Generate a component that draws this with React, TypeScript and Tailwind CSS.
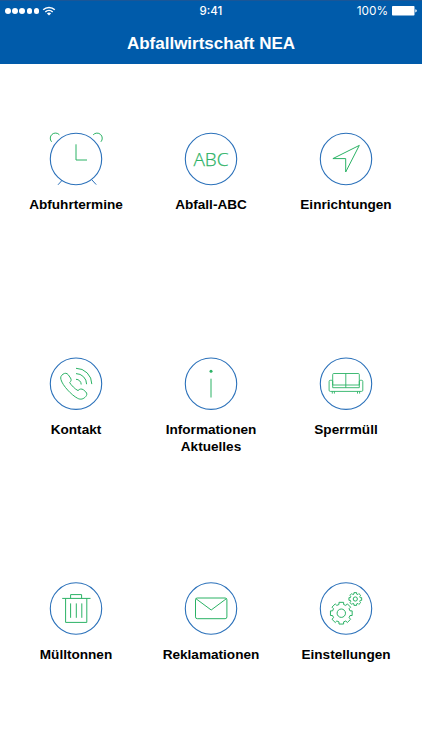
import type { ReactNode } from 'react';

const BLUE = '#2b71ba';
const GREEN = '#2bb265';

// Outline of a cog with eight flat teeth
const gearPath = (cx: number, cy: number, outer: number, root: number) => {
  const points: string[] = [];
  for (let i = 0; i < 8; i++) {
    const mid = i * 45 - 90;
    const corners = [
      [root, -15],
      [outer, -12],
      [outer, 12],
      [root, 15],
    ];
    corners.forEach(([r, offset]) => {
      const a = ((mid + offset) * Math.PI) / 180;
      points.push(`${(cx + r * Math.cos(a)).toFixed(2)} ${(cy + r * Math.sin(a)).toFixed(2)}`);
    });
  }
  return `M${points.join('L')}Z`;
};

const ClockIcon = () => (
  <>
    <path d="M30 15.3V31h11" />
    <path d="M5.6 12.8A4.9 4.9 0 0 1 13.4 5.8" />
    <path d="M47.2 5.8A4.9 4.9 0 0 1 54.9 12.8" />
    <path stroke={BLUE} d="M16.2 51.2l-4.2 4.6M45.8 50.8l4.4 4.8" />
  </>
);

const AbcIcon = () => (
  <text
    x="30"
    y="36.7"
    textAnchor="middle"
    textLength="35"
    lengthAdjust="spacingAndGlyphs"
    fill={GREEN}
    strokeWidth="0.25"
    className="font-['Open_Sans',sans-serif] text-[18.5px] font-light"
  >
    ABC
  </text>
);

const ArrowIcon = () => <path d="M43.3 16.4L16.9 29.6h12.8v13.4z" />;

const PhoneIcon = () => (
  <>
    <path d="M15 25.7C14.2 23.2 15 21.6 17 20.2C19 18.8 20.8 19 22.2 20.7L24.5 24C25.6 25.8 25.2 27 23.7 28.6C25 31 29.2 35.3 32 36.6C33.5 34.8 35.6 34.6 37.3 35.7L39.8 37.9C41.3 39.4 41 41.2 39.7 42.6C37.4 45.2 34.6 45.9 31.6 44.3C25.6 41.2 16.7 31.7 15 25.7Z" />
    <path d="M30 25.3a5.2 5.2 0 0 1 5.2 5.2M30 19.6a10.6 10.6 0 0 1 10.6 10.6M30 14.3a15.8 15.8 0 0 1 15.8 15.8" />
  </>
);

const InfoIcon = () => (
  <>
    <circle cx="30" cy="17.3" r="1.5" fill={GREEN} stroke="none" />
    <path d="M30 24.7v18.8" />
  </>
);

const SofaIcon = () => (
  <g strokeWidth="0.9">
    <path d="M16.7 31V20.5q0-1 1-1h24.6q1 0 1 1V31M29.8 19.5v14.2M16.7 31h26.6" />
    <path d="M16.7 33.7h26.6V27.5q0-1.2 1.2-1.2h1.1q1.2 0 1.2 1.2v8.7q0 1.2-1.2 1.2H14.3q-1.2 0-1.2-1.2v-8.7q0-1.2 1.2-1.2h1.2q1.2 0 1.2 1.2z" />
    <path d="M16.3 37.4v2.2M18.4 37.4v2.2M41.5 37.4v2.2M43.6 37.4v2.2" />
  </g>
);

const BinIcon = () => (
  <>
    <path d="M16.2 19.4h28.3M24.6 19.4v-3.8h11v3.8M19.6 19.4v24h21.2v-24" />
    <path d="M24.6 24.4v14.4M30.3 24.4v14.4M35.8 24.4v14.4" />
  </>
);

const MailIcon = () => (
  <>
    <rect x="14.5" y="19" width="31.4" height="20.7" rx="1.8" />
    <path d="M14.8 19.6L30.2 31l15.3-11.4" />
  </>
);

const GearsIcon = () => (
  <g strokeLinejoin="round">
    <path d={gearPath(25.3, 34.2, 11.1, 9)} />
    <circle cx="25.3" cy="34.2" r="4.2" />
    <path d={gearPath(39.3, 20, 6.5, 5.1)} />
    <circle cx="39.3" cy="20" r="2.1" />
  </g>
);

type Tile = { label: string[]; icon: ReactNode; cy: number };

const tiles: Tile[] = [
  { label: ['Abfuhrtermine'], icon: <ClockIcon />, cy: 30 },
  { label: ['Abfall-ABC'], icon: <AbcIcon />, cy: 30 },
  { label: ['Einrichtungen'], icon: <ArrowIcon />, cy: 30 },
  { label: ['Kontakt'], icon: <PhoneIcon />, cy: 29.7 },
  { label: ['Informationen', 'Aktuelles'], icon: <InfoIcon />, cy: 29.7 },
  { label: ['Sperrmüll'], icon: <SofaIcon />, cy: 29.7 },
  { label: ['Mülltonnen'], icon: <BinIcon />, cy: 29.5 },
  { label: ['Reklamationen'], icon: <MailIcon />, cy: 29.5 },
  { label: ['Einstellungen'], icon: <GearsIcon />, cy: 29.5 },
];

const StatusBar = () => (
  <div className="grid h-5 grid-cols-3 items-center px-[5px] text-[12px] leading-5">
    <div className="flex items-center gap-[3px]">
      <div className="flex gap-[1.6px]">
        {[0, 1, 2, 3, 4].map((dot) => (
          <span key={dot} className="h-[5.6px] w-[5.6px] rounded-full bg-white" />
        ))}
      </div>
      <svg width="14" height="10" viewBox="0 0 14 10" fill="none" stroke="white" strokeWidth="1.5">
        <path d="M1.2 3.7a8.4 8.4 0 0 1 11.6 0M3.3 6a5.4 5.4 0 0 1 7.4 0" />
        <path d="M7 9.6L4.9 7.5a3 3 0 0 1 4.2 0z" fill="white" stroke="none" />
      </svg>
    </div>
    <span className="text-center text-[11.5px] font-medium">9:41</span>
    <div className="flex items-center justify-end gap-1">
      <span className="text-[11.8px]">100%</span>
      <svg width="25" height="10" viewBox="0 0 25 10" fill="white">
        <rect width="22.5" height="9.6" rx="0.8" />
        <path d="M23.3 3.2q1.5.3 1.5 1.6t-1.5 1.6z" />
      </svg>
    </div>
  </div>
);

export default function App() {
  return (
    <div className="flex h-[750px] w-full flex-col bg-white font-['Liberation_Sans',Arial,sans-serif]">
      <header className="h-16 shrink-0 border-t border-[#1a5697] bg-[#005baa] font-['Inter',sans-serif] text-white">
        <StatusBar />
        <h1 className="pt-[13px] text-center font-['Liberation_Sans',Arial,sans-serif] text-[17px] leading-5 font-bold">
          Abfallwirtschaft NEA
        </h1>
      </header>

      <main className="mx-auto grid w-[405px] grid-cols-3 grid-rows-[225px_225px_auto] pt-[65px]">
        {tiles.map(({ label, icon, cy }) => (
          <div key={label[0]} className="flex flex-col items-center">
            <svg width="60" height="60" viewBox="0 0 60 60" fill="none" stroke={GREEN} strokeWidth="1">
              <circle cx="30" cy={cy} r="25.7" stroke={BLUE} strokeWidth="1.1" />
              {icon}
            </svg>
            <p className="mt-2 text-center text-[13.6px] leading-[16.5px] font-bold text-black">
              {label.map((line) => (
                <span key={line} className="block">
                  {line}
                </span>
              ))}
            </p>
          </div>
        ))}
      </main>
    </div>
  );
}
